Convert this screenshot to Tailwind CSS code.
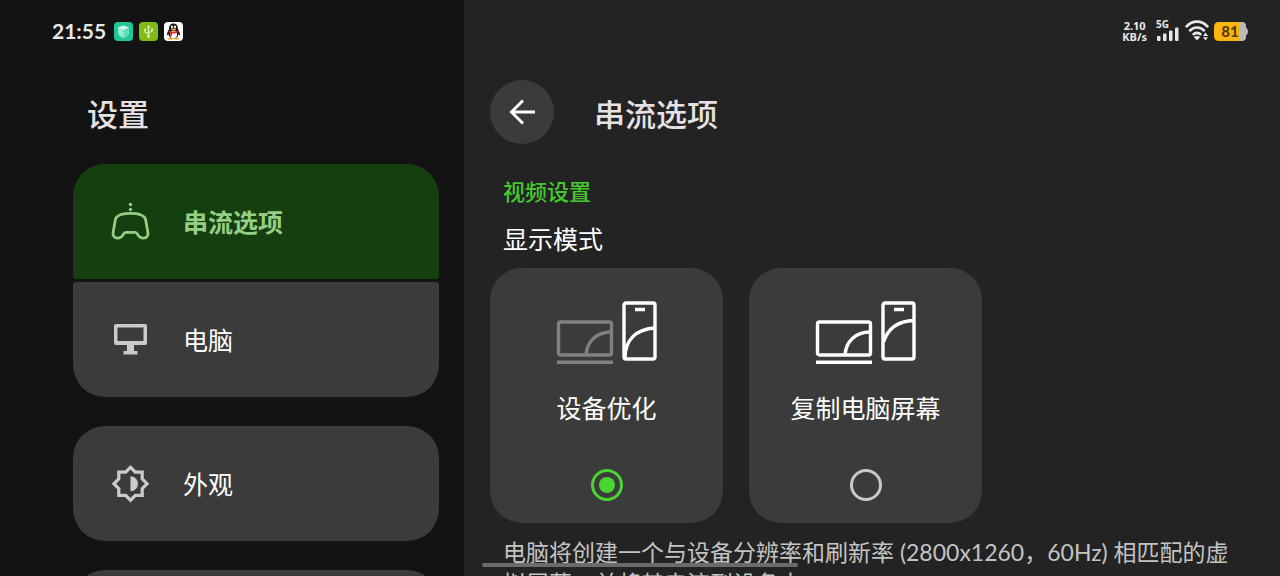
<!DOCTYPE html>
<html lang="zh-CN">
<head>
  <meta charset="UTF-8" />
  <meta name="viewport" content="width=device-width, initial-scale=1.0" />
  <title>设置</title>
  <script src="https://cdn.jsdelivr.net/npm/@tailwindcss/browser@4"></script>
</head>
<body class="bg-[#232323] text-white font-['Lato','Noto_Sans_CJK_SC',sans-serif]">
  <div class="flex h-screen overflow-hidden">
    <!-- Sidebar -->
    <aside class="w-[36.25%] shrink-0 bg-[#131313] overflow-hidden">
      <div class="flex items-center h-[62px] pl-[52px] gap-1.5">
        <time class="text-[21px] leading-6 font-bold text-[#e8e8e8] mr-0.5">21:55</time>
        <svg class="w-[19px] h-[19px]" viewBox="0 0 19 19">
          <rect width="19" height="19" rx="4" fill="#21c798" />
          <path d="M9.500 3.500 15 5.500v5c0 2.500-2.500 4.500-5.500 5.500C6.500 15 4 13 4 10.500v-5z" fill="#8ff0d2" />
          <path d="M9.500 3.500 15 5.500 9.500 8 4 5.500z" fill="#d8fff3" />
          <path d="M9.500 8v8C12.500 15 15 13 15 10.500v-5z" fill="#63dfb9" />
        </svg>
        <svg class="w-[19px] h-[19px]" viewBox="0 0 19 19">
          <rect width="19" height="19" rx="4" fill="#80bd18" />
          <path d="M9.500 5v9M9.500 12 6 10V8M9.500 11 13 9V7.500" fill="none" stroke="#e6f5c8" stroke-width="1.100" />
          <path d="M9.500 3 11.200 5.800H7.800z" fill="#e6f5c8" />
          <circle cx="9.500" cy="14.300" r="1.500" fill="#e6f5c8" />
          <circle cx="6" cy="7.800" r="1.100" fill="#e6f5c8" />
          <path d="M12 6.500h2v2h-2z" fill="#e6f5c8" />
        </svg>
        <svg class="w-[19px] h-[19px]" viewBox="0 0 19 19">
          <rect width="19" height="19" rx="4" fill="#fff" />
          <path d="M9.500 1.500c-3 0-4.300 2.300-4.300 4.800 0 1.500-2.200 4-2.200 6.200 0 1 .8.800 1.600-.3.500 3 2 4.300 4.900 4.300s4.400-1.300 4.900-4.300c.8 1.100 1.600 1.300 1.600.3 0-2.200-2.200-4.700-2.200-6.200 0-2.500-1.300-4.800-4.300-4.800z" fill="#151515" />
          <ellipse cx="9.500" cy="12.500" rx="3.500" ry="3.700" fill="#fff" />
          <ellipse cx="8" cy="5" rx="1" ry="1.400" fill="#fff" />
          <ellipse cx="11" cy="5" rx="1" ry="1.400" fill="#fff" />
          <ellipse cx="9.500" cy="7.500" rx="2.700" ry="1" fill="#f5a623" />
          <path d="M5 8.500c2.500 1.600 6.500 1.600 9 0l.5 1.700c-1.500.9-3.500 1.300-5 1.300l-1.500-.1v2.600H6.200v-3l-1.700-.8z" fill="#e5262b" />
          <ellipse cx="6.500" cy="16.700" rx="2.500" ry="1" fill="#f5a623" />
          <ellipse cx="12.500" cy="16.700" rx="2.500" ry="1" fill="#f5a623" />
        </svg>
      </div>

      <h1 class="pl-[87px] pt-8 text-[31px] leading-10 font-medium text-[#e6e1e5]">设置</h1>

      <nav class="flex flex-col gap-[29px] pl-[73px] pr-[25px] pt-[30px] text-[25px] leading-9">
        <div class="flex flex-col gap-[3px] rounded-[32px] overflow-hidden">
          <a href="#stream" class="flex items-center gap-8 h-[115px] pl-[38px] rounded-b-[3px] bg-[#163f0f] text-[#96ce86] font-bold">
            <svg class="w-10 h-10" viewBox="0 0 40 40" fill="none" stroke="currentColor" stroke-width="2.800" stroke-linejoin="round">
              <circle cx="19.500" cy="2.500" r="1.700" fill="currentColor" stroke="none" />
              <circle cx="19.500" cy="7.500" r="1.700" fill="currentColor" stroke="none" />
              <path d="M9.500 12.700C15 11 24 11 29.500 12.700C32.500 13.800 34.300 15.500 34.700 18L36.900 30.500C37.500 34 35.500 36.200 32.500 36.200C29.500 36.200 27.700 34.500 26.500 32.200C25.900 31 25.500 30.300 24 30.300H15C13.500 30.300 13.100 31 12.500 32.200C11.300 34.500 9.500 36.200 6.500 36.200C3.500 36.200 1.600 34 2.100 30.500L4.300 18C4.700 15.500 6.500 13.800 9.500 12.700Z" />
            </svg>
            串流选项
          </a>
          <a href="#pc" class="flex items-center gap-8 h-[115px] pl-[38px] rounded-t-[3px] bg-[#3b3b3b]">
            <svg class="w-10 h-10" viewBox="0 0 40 40" fill="#cbcbcb">
              <path fill-rule="evenodd" d="M5 4h29q2 0 2 2v17q0 2-2 2H23v6h3.500v3.500H12.500V31H16v-6H5q-2 0-2-2V6q0-2 2-2zM6.500 7.500v13.500h26v-13.500z" />
            </svg>
            电脑
          </a>
        </div>
        <a href="#appearance" class="flex items-center gap-8 h-[115px] shrink-0 pl-[38px] rounded-[32px] bg-[#3b3b3b]">
          <svg class="w-10 h-10" viewBox="0 0 40 40" fill="#cbcbcb">
            <path fill-rule="evenodd" d="M19.500 1 25 6.500H32.800V14.200L38.300 19.800 32.800 25.300V33H25L19.500 38.600 14 33H6.200V25.300L.7 19.800 6.200 14.200V6.500H14zM19.500 5.500 15.400 9.700H9.400V15.600L5.200 19.800 9.400 24V29.800H15.400L19.500 34 23.700 29.800H29.600V24L33.800 19.800 29.600 15.600V9.700H23.700z" />
            <path d="M19.500 12.300a7.500 7.500 0 0 1 0 15z" />
          </svg>
          外观
        </a>
        <a href="#more" aria-label="更多" class="h-[115px] shrink-0 rounded-[32px] bg-[#3b3b3b]"></a>
      </nav>
    </aside>

    <!-- Main -->
    <main class="flex-1 min-w-0 overflow-hidden">
      <div class="flex items-center justify-end h-[62px] pr-8 gap-[5px] text-[#e8e8e8]">
        <div class="font-['Noto_Sans',sans-serif] text-[11px] leading-[11px] font-bold text-center mr-1">2.10<br>KB/s</div>
        <svg class="w-6 h-[22px] overflow-visible font-['Noto_Sans',sans-serif]" viewBox="0 0 24 22" fill="currentColor">
          <text x="0" y="8" font-size="10" font-weight="700">5G</text>
          <rect x="1" y="16" width="3.500" height="5" rx="1" />
          <rect x="7" y="13.500" width="3.500" height="7.500" rx="1" />
          <rect x="13" y="10.500" width="3.500" height="10.500" rx="1" />
          <rect x="19" y="7.500" width="3.500" height="13.500" rx="1" />
        </svg>
        <svg class="w-6 h-[22px]" viewBox="0 0 24 22" fill="none" stroke="currentColor" stroke-width="2.600">
          <path d="M.8 7.200C7-.3 17-.3 23.200 7.200M4.300 11.200c4.500-5 10.900-5 15.400 0M7.800 14.800c2.500-2.600 5.900-2.600 8.400 0" />
          <path d="M8.800 17 12 20.500 15.200 17C13.500 15.600 10.500 15.600 8.800 17z" fill="currentColor" stroke="none" />
          <path d="M20.500 12.500 23 16H18zM20.500 20.500 23 17.300H18z" fill="currentColor" stroke="none" />
        </svg>
        <svg class="w-[34px] h-[19px]" viewBox="0 0 34 19">
          <path d="M24 0h4q4 0 4 4v1.500q2 1 2 4t-2 4V15q0 4-4 4h-4z" fill="#b9b9b9" />
          <path d="M5 0h21v19H5q-5 0-5-5V5q0-5 5-5z" fill="#f9b60e" />
          <text x="16" y="14.500" text-anchor="middle" font-size="15" font-weight="900" fill="#5a3c05">81</text>
        </svg>
      </div>

      <header class="flex items-center gap-10 pt-[18px] pl-[26px]">
        <button type="button" aria-label="返回" class="flex items-center justify-center size-16 rounded-full bg-[#3b3b3b]">
          <svg class="w-[26px] h-[26px]" viewBox="0 0 26 26" fill="none" stroke="#fff" stroke-width="3">
            <path d="M26 13H2.500M14 1.500 2.500 13 14 24.500" />
          </svg>
        </button>
        <h2 class="pt-1 text-[31px] leading-10 font-medium text-[#e6e1e5]">串流选项</h2>
      </header>

      <section class="pl-[26px] pr-[26px]">
        <h3 class="pl-[13px] pt-8 text-[22px] leading-8 font-medium text-[#45c92f]">视频设置</h3>
        <fieldset class="min-w-0">
          <legend class="pl-[13px] pt-[13px] pb-[11px] text-[25px] leading-9">显示模式</legend>
          <div class="flex gap-[26px]">
            <label class="flex flex-col items-center w-[233px] h-[255px] pt-8 pb-[22px] rounded-[32px] bg-[#3b3b3b] text-[25px] leading-9">
              <svg class="w-[102px] h-16" viewBox="0 0 102 64" fill="none" stroke-width="3.400">
                <g stroke="#808080">
                  <rect x="2.500" y="22" width="53" height="33" rx="2" />
                  <path d="M30 55C31 41 41 32 55 32M1 62.300h56" />
                </g>
                <g stroke="#fff">
                  <rect x="68" y="3" width="31" height="56" rx="2" />
                  <path d="M79 9.500h10M69 58C69 40 80 29 99 28" />
                </g>
              </svg>
              <span class="mt-[26px]">设备优化</span>
              <input type="radio" name="mode" checked class="appearance-none mt-auto size-8 rounded-full border-3 border-[#c9c9c9] flex items-center justify-center checked:border-[#4bd332] checked:before:size-4 checked:before:rounded-full checked:before:bg-[#4bd332]" />
            </label>
            <label class="flex flex-col items-center w-[233px] h-[255px] pt-8 pb-[22px] rounded-[32px] bg-[#3b3b3b] text-[25px] leading-9">
              <svg class="w-[102px] h-16" viewBox="0 0 102 64" fill="none" stroke="#fff" stroke-width="3.400">
                <rect x="2.500" y="22" width="53" height="33" rx="2" />
                <path d="M30 55C31 41 41 32 55 32M1 62.300h56" />
                <rect x="68" y="3" width="31" height="56" rx="2" />
                <path d="M79 9.500h10M68.500 42C73 28 83 21 99 20.500" />
              </svg>
              <span class="mt-[26px]">复制电脑屏幕</span>
              <input type="radio" name="mode" class="appearance-none mt-auto size-8 rounded-full border-3 border-[#c9c9c9] flex items-center justify-center checked:border-[#4bd332] checked:before:size-4 checked:before:rounded-full checked:before:bg-[#4bd332]" />
            </label>
          </div>
        </fieldset>
        <p class="pl-[13px] pr-4 pt-3.5 text-[23px] leading-[31px] text-[#c4c4c4]">电脑将创建一个与设备分辨率和刷新率 (2800x1260，60Hz) 相匹配的虚拟屏幕，并将其串流到设备中。</p>
      </section>
    </main>
  </div>

  <!-- Gesture bar -->
  <div class="fixed bottom-[9px] left-[482px] w-[316px] h-1 rounded-full bg-[#6b6b6b]"></div>
</body>
</html>
